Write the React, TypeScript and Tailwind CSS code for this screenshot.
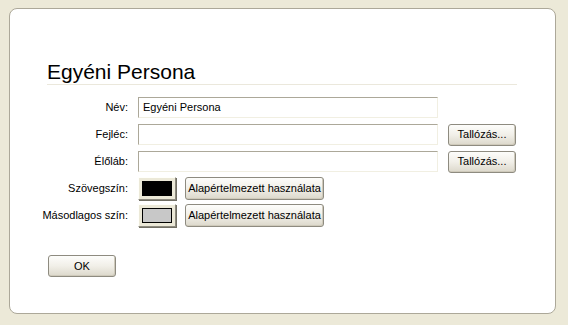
import React from 'react'

const font = { fontFamily: '"Liberation Sans", Arial, sans-serif' }

function XpButton({ children, className = '' }: { children: React.ReactNode; className?: string }) {
  return (
    <button
      className={
        'h-[22px] rounded-[3px] border border-[#8e8b80] bg-gradient-to-b from-[#fdfdfb] via-[#f1efe8] to-[#dcd8cb] text-[11px] text-black leading-none shadow-[inset_-1px_-1px_0_#cfcabb] ' +
        className
      }
    >
      {children}
    </button>
  )
}

function Field({ value = '' }: { value?: string }) {
  return (
    <div className="h-[21px] w-[300px] border border-t-[#aca899] border-l-[#aca899] border-b-[#f1efe2] border-r-[#f1efe2] bg-white flex items-center pl-[4px] text-[11px] text-black">
      {value}
    </div>
  )
}

function Swatch({ color }: { color: string }) {
  return (
    <div className="h-[23px] w-[38px] border border-t-[#fffffb] border-l-[#fffffb] border-b-[#8e8b80] border-r-[#8e8b80] bg-[#ece9d8] flex items-center justify-center shadow-[1px_1px_0_#716f64]">
      <div className={'h-[15px] w-[30px] border border-black ' + color} />
    </div>
  )
}

function Row({ label, children }: { label: string; children: React.ReactNode }) {
  return (
    <div className="h-[27px] flex items-center">
      <div className="w-[81px] flex justify-end whitespace-nowrap text-[11px] text-black">{label}</div>
      <div className="ml-[10px] flex items-center">{children}</div>
    </div>
  )
}

export default function App() {
  return (
    <div className="w-[568px] h-[325px] bg-[#ece9d8] pt-[8px] pl-[9px]" style={font}>
      <div className="w-[547px] h-[306px] rounded-[8px] border border-[#aca899] bg-white pt-[51px] pl-[37px]">
        <h1 className="w-[470px] h-[25px] border-b border-[#ebe8dc] text-[21px] leading-[24px] text-black font-normal">
          Egyéni Persona
        </h1>

        <div className="mt-[9px]">
          <Row label="Név:">
            <Field value="Egyéni Persona" />
          </Row>
          <Row label="Fejléc:">
            <Field />
            <XpButton className="ml-[10px] w-[68px]">Tallózás...</XpButton>
          </Row>
          <Row label="Élőláb:">
            <Field />
            <XpButton className="ml-[10px] w-[68px]">Tallózás...</XpButton>
          </Row>
          <Row label="Szövegszín:">
            <Swatch color="bg-black" />
            <XpButton className="ml-[9px] w-[139px] h-[23px]">Alapértelmezett használata</XpButton>
          </Row>
          <Row label="Másodlagos szín:">
            <Swatch color="bg-[#c8c8c8]" />
            <XpButton className="ml-[9px] w-[139px] h-[23px]">Alapértelmezett használata</XpButton>
          </Row>
        </div>

        <XpButton className="mt-[26px] ml-[1px] w-[68px]">OK</XpButton>
      </div>
    </div>
  )
}
